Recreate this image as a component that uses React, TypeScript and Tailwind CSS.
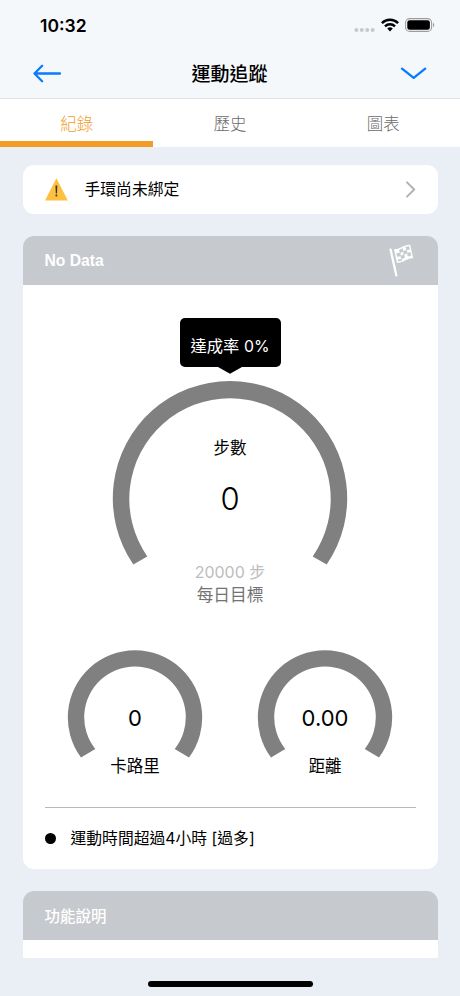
import React from "react";

function StatusBar() {
  return (
    <div className="flex h-[50px] items-center justify-between pr-[25px] pl-[40px]">
      <span className="mt-px text-[17.5px] leading-6 font-semibold">10:32</span>
      <div className="flex items-center">
        <svg width="21" height="6" viewBox="0 0 21 6" className="mt-[9px]" fill="#c6c9cb">
          <circle cx="2.4" cy="3" r="2" />
          <circle cx="7.8" cy="3" r="2" />
          <circle cx="13.2" cy="3" r="2" />
          <circle cx="18.6" cy="3" r="2" />
        </svg>
        <svg width="18" height="14" viewBox="0 0 18 14" className="ml-[6px]" fill="none" stroke="#000" strokeWidth="2.5">
          <path d="M0.9 5.1a11.6 11.6 0 0 1 16.2 0" />
          <path d="M4 8.3a7.2 7.2 0 0 1 10 0" />
          <path d="M9 13.4 6.2 10.6a4 4 0 0 1 5.6 0Z" fill="#000" stroke="none" />
        </svg>
        <svg width="30" height="14" viewBox="0 0 30 14" className="ml-[6px]">
          <rect x="0.6" y="0.6" width="26" height="12.8" rx="4" fill="none" stroke="#9b9d9e" strokeWidth="1.1" />
          <rect x="2.3" y="2.3" width="22.6" height="9.4" rx="2.3" fill="#000" />
          <path d="M28 4.8v4.4c1.8-.8 1.8-3.6 0-4.4Z" fill="#9b9d9e" />
        </svg>
      </div>
    </div>
  );
}

function TitleBar() {
  return (
    <div className="flex h-[48px] items-center justify-between pr-[33px] pl-[32px]">
      <svg width="29" height="20" viewBox="0 0 29 20" fill="none" stroke="#0a7aff" strokeWidth="2.3" strokeLinecap="round" strokeLinejoin="round">
        <path d="M28 9.5H2.5M10.1 1.8 2.5 9.5l7.6 7.7" />
      </svg>
      <h1 className="mt-[2px] mr-[2px] text-[19px] leading-6 font-medium">運動追蹤</h1>
      <svg width="27" height="14" viewBox="0 0 27 14" fill="none" stroke="#0a7aff" strokeWidth="2.3" strokeLinecap="round" strokeLinejoin="round">
        <path d="M2 1.6 13.7 10.8 25.2 1.6" />
      </svg>
    </div>
  );
}

function Tabs() {
  return (
    <nav className="grid h-[48px] grid-cols-3 bg-white text-center text-[16.5px] leading-[42px] font-light text-[#6b6b6b]">
      <div className="h-[48px] border-b-[6px] border-[#f29b27] pt-[4px] text-[#f29b27]">紀錄</div>
      <div className="pt-[4px]">歷史</div>
      <div className="pt-[4px]">圖表</div>
    </nav>
  );
}

function Flag() {
  return (
    <svg width="26" height="34" viewBox="0 0 26 34" className="mr-[23px]">
      <path d="M1.6 5.7 7.3 31.3" stroke="#fff" strokeWidth="2.3" strokeLinecap="round" />
      <path d="M4.9 5.3C11 5.9 14.5.3 21.3.9L24.2 14.2C17.5 13.7 14 19.4 7.9 18.7Z" fill="#fff" />
      <g fill="#c6c9cd" stroke="#c6c9cd" strokeWidth="0.4">
        <path d="M10.4 5.9 13.6 4.5 14.3 7.4 11.1 8.8Z" />
        <path d="M16.8 3 20 2.5 20.6 5.4 17.5 6Z" />
        <path d="M7.6 9.4 11.1 8.8 11.8 12 8.3 12.6Z" />
        <path d="M14.3 7.4 17.5 6 18.2 9.1 15 10.5Z" />
        <path d="M11.8 12 15 10.5 15.7 13.6 12.5 15.1Z" />
        <path d="M18.2 9.1 21.4 8.5 22.1 11.6 18.9 12.2Z" />
        <path d="M9 15.7 12.5 15.1 12.9 16.6 9.4 17.2Z" />
      </g>
    </svg>
  );
}

function BindingNotice() {
  return (
    <div className="flex h-[49px] shrink-0 items-center rounded-[11px] bg-white pr-[22px] pl-[22px]">
      <svg width="23" height="23" viewBox="0 0 23 23">
        <path d="M11.4.3 22.8 22.6H0Z" fill="#fdc13f" />
        <path d="M10.5 7.6h1.8l-.3 7.8h-1.2Z" fill="#333" />
        <circle cx="11.4" cy="17.4" r="1" fill="#333" />
      </svg>
      <span className="mt-[2px] ml-[17px] flex-1 text-[15.8px] leading-6">手環尚未綁定</span>
      <svg width="11" height="17" viewBox="0 0 11 17" fill="none" stroke="#b2b2b2" strokeWidth="2" strokeLinecap="round" strokeLinejoin="round">
        <path d="M2 1.4 9.2 8.5 2 15.6" />
      </svg>
    </div>
  );
}

function SmallGauge({ value, label }: { value: string; label: string }) {
  return (
    <div className="grid w-[136px]">
      <svg width="136" height="128" viewBox="0 0 136 128" className="col-start-1 row-start-1">
        <path d="M14 108.5A67.2 67.2 0 1 1 122 108.5L107.7 100A50.8 50.8 0 1 0 28.3 100Z" fill="#808080" />
      </svg>
      <div className="col-start-1 row-start-1 flex flex-col items-center pt-[53px]">
        <span className="text-[22px] leading-8">{value}</span>
        <span className="mt-5 text-[16.5px] leading-6">{label}</span>
      </div>
    </div>
  );
}

function StepGauge() {
  return (
    <div className="grid">
      <svg width="236" height="190" viewBox="0 0 236 190" className="col-start-1 row-start-1 justify-self-center">
        <path d="M21.3 184.4A117.2 117.2 0 1 1 214.7 184.4L200.7 176.4A100.7 100.7 0 1 0 35.3 176.4Z" fill="#808080" />
      </svg>
      <div className="col-start-1 row-start-1 flex flex-col items-center pt-[56px]">
        <span className="text-[16.5px] leading-6">步數</span>
        <span className="mt-[19px] text-[31px] leading-10 font-[350]">0</span>
        <span className="mt-[41px] text-[16px] leading-6 text-[#bdbdbd]">20000 步</span>
        <span className="text-[16.7px] leading-[23px] text-[#737373]">每日目標</span>
      </div>
    </div>
  );
}

export default function App() {
  return (
    <div className="flex h-[996px] w-[460px] flex-col overflow-hidden bg-[#eaeff5] font-['Inter','Noto_Sans_CJK_TC',sans-serif] text-black">
      <header className="h-[99px] border-b border-[#dfe2e4] bg-[#f5f8fa]">
        <StatusBar />
        <TitleBar />
      </header>
      <Tabs />
      <main className="flex h-[811px] flex-col overflow-hidden px-[22.5px] pt-[17.5px]">
        <BindingNotice />
        <section className="mt-[22.5px] h-[633px] shrink-0 overflow-hidden rounded-[11px] bg-white">
          <div className="flex h-[49px] items-center justify-between bg-[#c6c9cd] pl-[22px]">
            <h2 className="font-['Liberation_Sans',sans-serif] text-[15.7px] leading-6 font-bold text-white">No Data</h2>
            <Flag />
          </div>
          <div className="flex flex-col items-center pt-[33px]">
            <div className="h-[49px] w-[101px] rounded-[5px] bg-black pt-[16px] text-center text-[16.3px] leading-6 whitespace-nowrap text-white">
              達成率 <span className="text-[15.8px]">0%</span>
            </div>
            <svg width="26" height="7" viewBox="0 0 26 7">
              <path d="M1 0H25L13 6.7Z" />
            </svg>
          </div>
          <div className="mt-[6px] h-[232px]">
            <StepGauge />
          </div>
          <div className="mt-[37px] flex h-[158px] gap-[54px] pl-[44.5px]">
            <SmallGauge value="0" label="卡路里" />
            <SmallGauge value="0.00" label="距離" />
          </div>
          <div className="mx-[22px] flex h-[61px] items-center border-t border-[#b8b8b8]">
            <span className="size-[11px] rounded-full bg-black" />
            <span className="mt-px ml-[15px] text-[15.8px] leading-6">運動時間超過4小時 [過多]</span>
          </div>
        </section>
        <section className="mt-[22px] h-[90px] shrink-0 overflow-hidden rounded-t-[11px] bg-white">
          <h2 className="h-[49px] bg-[#c6c9cd] pl-[22px] text-[15.5px] leading-[51px] font-medium text-white">功能說明</h2>
        </section>
      </main>
      <footer className="flex justify-center pt-[23px]">
        <div className="h-[6px] w-[165px] rounded-full bg-black" />
      </footer>
    </div>
  );
}
